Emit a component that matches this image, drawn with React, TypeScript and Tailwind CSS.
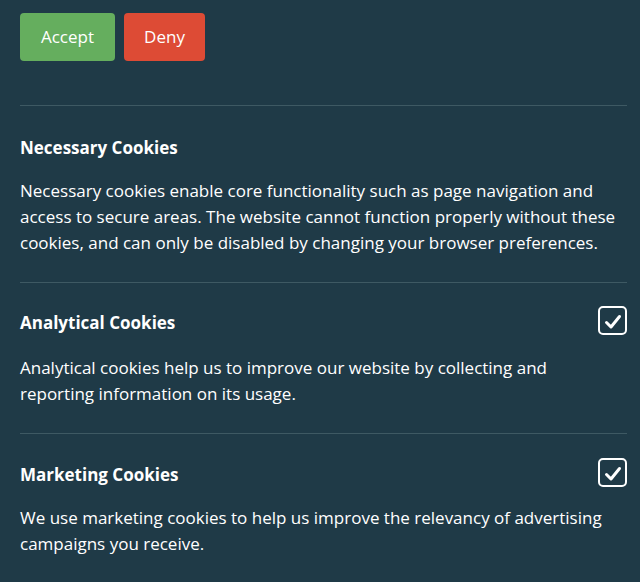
import React from 'react'

function CheckBox() {
  return (
    <div className="relative w-[29px] h-[29px] rounded-[5px] border-2 border-white shrink-0">
      <svg className="absolute -left-[2px] -top-[2px]" width="29" height="29" viewBox="0 0 29 29" fill="none">
        <path d="M8.5 16.5 L13 21 L21.5 10.5" stroke="white" strokeWidth="3" strokeLinecap="round" strokeLinejoin="round" />
      </svg>
    </div>
  )
}

export default function App() {
  return (
    <div
      className="w-[640px] h-[582px] bg-[#1f3a47] text-white pl-[20px] pr-[13px] pt-[13px] overflow-hidden"
      style={{ fontFamily: '"Open Sans", "Noto Sans", sans-serif' }}
    >
      <div className="flex gap-[9px]">
        <button className="h-[48px] w-[95px] rounded-[4px] bg-[#65ae5e] text-[17px] font-medium">Accept</button>
        <button className="h-[48px] w-[81px] rounded-[4px] bg-[#dd4b35] text-[17px] font-medium">Deny</button>
      </div>

      <div className="mt-[44px] border-t border-[#3e5963]" />

      <div className="pt-[29px] pb-[26px]">
        <h3 className="text-[17px] leading-[26px] font-bold">Necessary Cookies</h3>
        <p className="mt-[17px] pr-[7px] text-[17px] leading-[26px]">
          Necessary cookies enable core functionality such as page navigation and access to secure areas. The website cannot function properly without these cookies, and can only be disabled by changing your browser preferences.
        </p>
      </div>

      <div className="border-t border-[#3e5963]" />

      <div className="pt-[23px] pb-[26px]">
        <div className="flex items-center justify-between">
          <h3 className="relative top-[2px] text-[17px] leading-[26px] font-bold">Analytical Cookies</h3>
          <CheckBox />
        </div>
        <p className="mt-[20px] pr-[7px] text-[17px] leading-[26px]">
          Analytical cookies help us to improve our website by collecting and reporting information on its usage.
        </p>
      </div>

      <div className="border-t border-[#3e5963]" />

      <div className="pt-[24px]">
        <div className="flex items-center justify-between">
          <h3 className="relative top-[2px] text-[17px] leading-[26px] font-bold">Marketing Cookies</h3>
          <CheckBox />
        </div>
        <p className="mt-[18px] pr-[7px] text-[17px] leading-[26px]">
          We use marketing cookies to help us improve the relevancy of advertising campaigns you receive.
        </p>
      </div>
    </div>
  )
}
